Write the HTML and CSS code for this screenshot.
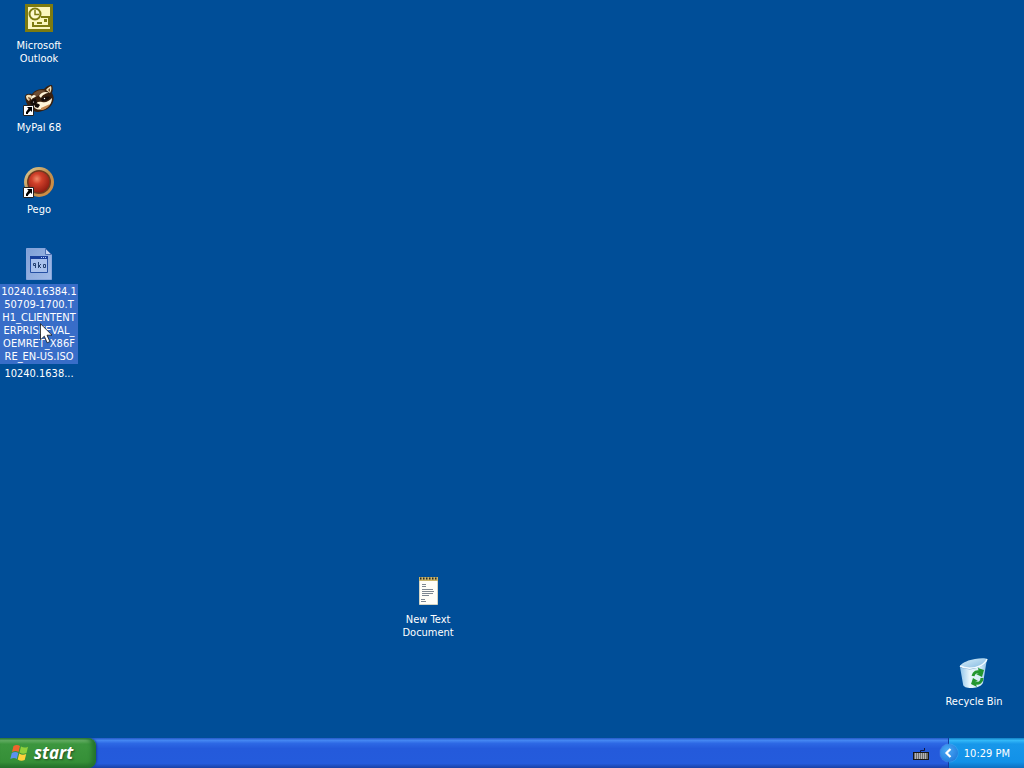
FILE: index.html
```html
<!DOCTYPE html>
<html lang="en">
<head>
<meta charset="utf-8">
<title>Desktop</title>
<link rel="stylesheet" href="styles.css">
</head>
<body>
<svg class="defs" width="0" height="0" aria-hidden="true">
  <defs>
    <linearGradient id="sheet" x1="0" y1="0" x2="1" y2="1"><stop offset="0" stop-color="#7f9fd6"/><stop offset="1" stop-color="#a3bce8"/></linearGradient>
    <linearGradient id="bin" x1="0" y1="0" x2="1" y2="0"><stop offset="0" stop-color="#8fc4ea"/><stop offset=".35" stop-color="#e6f5fb"/><stop offset=".75" stop-color="#d5edf8"/><stop offset="1" stop-color="#8cbfe6"/></linearGradient>
    <linearGradient id="binside" x1="0" y1="0" x2="1" y2="1"><stop offset="0" stop-color="#d8effa"/><stop offset="1" stop-color="#7fb6e0"/></linearGradient>
    <radialGradient id="ruby" cx=".4" cy=".35" r=".7"><stop offset="0" stop-color="#f08a68"/><stop offset=".35" stop-color="#d0402a"/><stop offset="1" stop-color="#8c1a10"/></radialGradient>
    <linearGradient id="brass" x1="0" y1="0" x2="1" y2="1"><stop offset="0" stop-color="#e0cf98"/><stop offset=".5" stop-color="#bd9050"/><stop offset="1" stop-color="#d98a3c"/></linearGradient>
    <symbol id="shortcut" viewBox="0 0 11 11"><path fill="#fff" stroke="#222" d="M.5.5h10v10H.5z"/><path fill="#000" d="M4 2h5v5L7.500 5.500 5 8v1H3V7l2.500-3.500z"/></symbol>
  </defs>
</svg>
<main class="desktop">
  <button class="item outlook" type="button">
    <svg class="icon" viewBox="0 0 32 32" aria-hidden="true">
      <path fill="#7d7b10" d="M2 2h28v28H2z"/><path fill="#fbf6bd" d="M5 5h22v22H5z"/>
      <path d="M18 15h8v9H10v-4" fill="none" stroke="#7d7b10" stroke-width="2"/>
      <circle cx="12" cy="12" r="5.500" fill="#fffad0" stroke="#7d7b10" stroke-width="2"/>
      <path d="M12 8v4.500h4" fill="none" stroke="#7d7b10" stroke-width="1.500"/>
      <path fill="#7d7b10" d="M21 17h3v3h-3zM14 20h5v2h-5z"/>
    </svg>
    <span class="label">Microsoft<br>Outlook</span>
  </button>
  <button class="item mypal" type="button">
    <svg class="icon" viewBox="0 0 32 32" aria-hidden="true">
      <path fill="#38200f" d="M2 13c0-3 3-4 7-3 3-4 7-5 12-5 2-2 4-4 8-4 1 3 1 6 0 8 2 3 2 6 1 9-2 6-8 9-15 10-6 0-12-6-13-15z"/>
      <path fill="#f0dfb5" d="M3 12c2-2 4-1 6 0l-3 5c-2-1-3-3-3-5zM23 6c1-2 3-3 5-4 1 3 0 5-1 7z"/>
      <path fill="#7b4a26" d="M5 13l3 1-2 2zM25 6l2-2v4z"/>
      <path fill="#6d4c31" d="M10 10c4-4 8-5 13-3l-5 3-5 3z"/>
      <path fill="#fff4d8" d="M8 14c1-3 3-4 5-2 0 1-4 2-5 4zM16 12c2-4 7-5 10-3-3 0-7 2-8 5zM11 23c1-4 4-6 8-5 4 1 7-1 10-4 0 5-3 9-8 11-4 1-8 1-10-2z"/>
      <path fill="#150d09" d="M7 19c1-3 4-5 6-4l1 4-4 3zM18 15c2-2 6-3 9-2-1 3-4 4-8 4zM12 20c2-1 4 0 5 1l-2 3-3-1z"/>
      <path fill="#c88b52" d="M18 24l9-4c-2 4-6 6-9 6z"/>
      <circle cx="21.500" cy="14.500" r=".7" fill="#fff"/><circle cx="10.500" cy="18" r=".6" fill="#fff"/>
      <use href="#shortcut" y="21" width="11" height="11"/>
    </svg>
    <span class="label">MyPal 68</span>
  </button>
  <button class="item pego" type="button">
    <svg class="icon" viewBox="0 0 32 32" aria-hidden="true">
      <circle cx="16" cy="16" r="15" fill="url(#brass)"/><circle cx="16" cy="16" r="12" fill="#6e3a20"/>
      <circle cx="16" cy="16" r="10.500" fill="url(#ruby)"/>
      <use href="#shortcut" y="21" width="11" height="11"/>
    </svg>
    <span class="label">Pego</span>
  </button>
  <button class="item clipped" type="button"><span class="label">10240.1638...</span></button>
  <button class="item iso selected" type="button">
    <svg class="icon" viewBox="0 0 32 32" aria-hidden="true">
      <path fill="url(#sheet)" stroke="#86a5dc" d="M3.500.500h19l6 6v25h-25z"/><path fill="#c3d3f2" stroke="#4c70b4" d="M22.500.500v6h6z"/>
      <path fill="#a9c1ec" stroke="#2650a4" d="M7.500 8.500h17v16h-17z"/><path fill="#1a409c" d="M7 8h18v3H7z"/><path fill="#b6ccff" d="M18 9h1v1h-1zM20 9h1v1h-1zM22 9h1v1h-1z"/>
      <path fill="none" stroke="#244070" d="M10.500 15.500h2v2h-2zM12.500 17v3M15.500 14v6M18 16l-2 2 2 2M20.500 16.500h2v3h-2z"/>
    </svg>
    <span class="label">10240.16384.1<br>50709-1700.T<br>H1_CLIENTENT<br>ERPRISEEVAL_<br>OEMRET_X86F<br>RE_EN-US.ISO</span>
  </button>
  <button class="item textdoc" type="button">
    <svg class="icon" viewBox="0 0 32 32" aria-hidden="true">
      <path fill="#173d69" d="M8 4h18v25H8z"/><path fill="#fffef8" stroke="#d5d5c4" d="M7.500 3.500h18v25h-18z"/>
      <path fill="#c9b56b" d="M7 1h19v4H7z"/><path stroke="#2c2c24" stroke-width="2" stroke-dasharray="1.500 1.500" d="M8 2.500h17"/>
      <path stroke="#7d8791" d="M10 8.500h4M10 10.500h4M10 13.500h11M10 15.500h12M10 17.500h11M10 19.500h7M9 23.500h4M9 25.500h5"/>
    </svg>
    <span class="label">New Text<br>Document</span>
  </button>
  <button class="item bin" type="button">
    <svg class="icon" viewBox="0 0 32 32" aria-hidden="true">
      <path fill="url(#bin)" d="M2 9c6 3 15 3 21-1 3-2 5-4 6-7l-4 24c-2 4-8 5-12 5-4 0-8-1-8-4z"/>
      <path fill="url(#binside)" d="M2 8C5 4 11 2 17 1c5-1 11-1 12 0 0 4-4 7-8 8-7 2-15 2-19-1z"/>
      <path fill="none" stroke="#f2fbff" stroke-width="1.500" d="M2 8c5 3 14 3 20 0 4-2 6-4 7-7"/>
      <path fill="none" stroke="#23962f" stroke-width="3" d="M15 18c1-4 4-5 7-4M24 20c0 4-3 6-7 5"/>
      <path fill="#23962f" d="M20 10l6 2-2 7-6-3 3-1zM19 29l-6-3 2-6 5 3-3 1z"/>
    </svg>
    <span class="label">Recycle Bin</span>
  </button>
  <svg class="cursor" viewBox="0 0 13 21" aria-hidden="true"><path fill="#fff" stroke="#111" stroke-width=".8" d="M.5.800v16l3.800-3.600 2.900 6.600 2.700-1.200-2.900-6.400H12z"/></svg>
</main>
<footer class="taskbar">
  <button class="start" type="button">
    <svg class="flag" viewBox="0 0 20 18" aria-hidden="true">
      <path fill="#f0642d" d="M3.500 2C6 .500 8 .700 10 2L8.500 8C6.500 6.800 4.500 6.800 2 8z"/><path fill="#8fd03c" d="M11 2.500c2.500 1.400 4.500 1.400 7 .2L16.500 9c-2.500 1.200-4.500 1-7-.5z"/>
      <path fill="#5b91ef" d="M1.800 9c2.500-1.200 4.500-1.200 6.500 0l-1.500 6C5 13.800 3 13.800.300 15z"/><path fill="#ffd13b" d="M9.200 9.500c2.500 1.500 4.500 1.500 7 .5l-1.500 6c-2.500 1.200-4.500 1-7-.5z"/>
    </svg>
    <span>start</span>
  </button>
  <button class="keyboard" type="button" aria-label="Keyboard">
    <svg viewBox="0 0 16 14" aria-hidden="true"><path fill="none" stroke="#10183c" d="M7.500 5V3.500h4V1"/><path fill="#161616" d="M0 5h16v8H0z"/><path stroke="#fff" stroke-width="1.400" stroke-dasharray="1.400 .6" d="M1.500 7h13M1.500 9h13M1.500 11h13"/></svg>
  </button>
  <div class="tray">
    <button class="expand" type="button" aria-label="Show hidden icons"><svg viewBox="0 0 18 18" aria-hidden="true"><path fill="none" stroke="#fff" stroke-width="2.200" d="M10.500 5L6.500 9l4 4"/></svg></button>
    <time>10:29 PM</time>
  </div>
</footer>
</body>
</html>
```

FILE: styles.css
```css
* { box-sizing: border-box; }
body {
  margin: 0;
  min-height: 100vh;
  display: flex;
  flex-direction: column;
  overflow: hidden;
  background: #004e98;
  color: #fff;
  font: 11px/13px "DejaVu Sans Condensed", Tahoma, sans-serif;
}
button {
  margin: 0;
  padding: 0;
  border: 0;
  background: none;
  color: inherit;
  font: inherit;
}
svg { display: block; }
.defs { position: absolute; }

.desktop { position: relative; flex: 1; }
.item {
  position: absolute;
  left: 0;
  width: 78px;
  display: flex;
  flex-direction: column;
  align-items: center;
  gap: 4px;
}
.icon { width: 32px; height: 32px; }
.label { padding: 1px 2px; white-space: nowrap; }
.selected .label { align-self: stretch; padding: 1px 0; background: #386dc8; }
.outlook { top: 2px; }
.mypal { top: 84px; }
.pego { top: 166px; }
.iso { top: 248px; }
.clipped { top: 366px; }
.textdoc { top: 576px; left: 38%; }
.bin { top: 658px; left: auto; right: 11px; }
.cursor { position: absolute; left: 40px; top: 323px; width: 13px; height: 21px; }

.taskbar {
  display: flex;
  align-items: stretch;
  height: 30px;
  background: linear-gradient(#2459c8 0, #4487f2 8%, #2d68e4 18%, #245adb 35%, #245bdc 85%, #1941a5 100%);
}
.start {
  display: flex;
  align-items: center;
  gap: 4px;
  width: 96px;
  padding-left: 10px;
  border-radius: 0 8px 8px 0;
  background: linear-gradient(#2c7a38 0, #67b066 8%, #3c963e 20%, #358f37 80%, #24702a 100%);
  box-shadow: inset -4px 0 4px #24742c, 1px 0 2px #163f9f;
  font: italic bold 17px/20px "Open Sans", sans-serif;
  text-shadow: 1px 1px 2px #234d22;
}
.flag { width: 20px; height: 18px; }
.keyboard { margin-left: auto; padding: 2px 19px 0 0; }
.keyboard svg { width: 16px; height: 14px; }
.tray {
  display: flex;
  align-items: center;
  padding-right: 14px;
  border-left: 1px solid #123b9e;
  background: linear-gradient(#1180c5 0, #33b8f8 8%, #1797ea 20%, #1291e8 80%, #0d6fc0 100%);
}
.expand {
  width: 18px;
  height: 18px;
  margin-left: -9px;
  margin-right: 6px;
  border-radius: 50%;
  background: radial-gradient(circle at 40% 35%, #4ba9f6, #1670d5);
  box-shadow: 0 0 1px #9ed5ff;
}
.expand svg { width: 18px; height: 18px; }
```
